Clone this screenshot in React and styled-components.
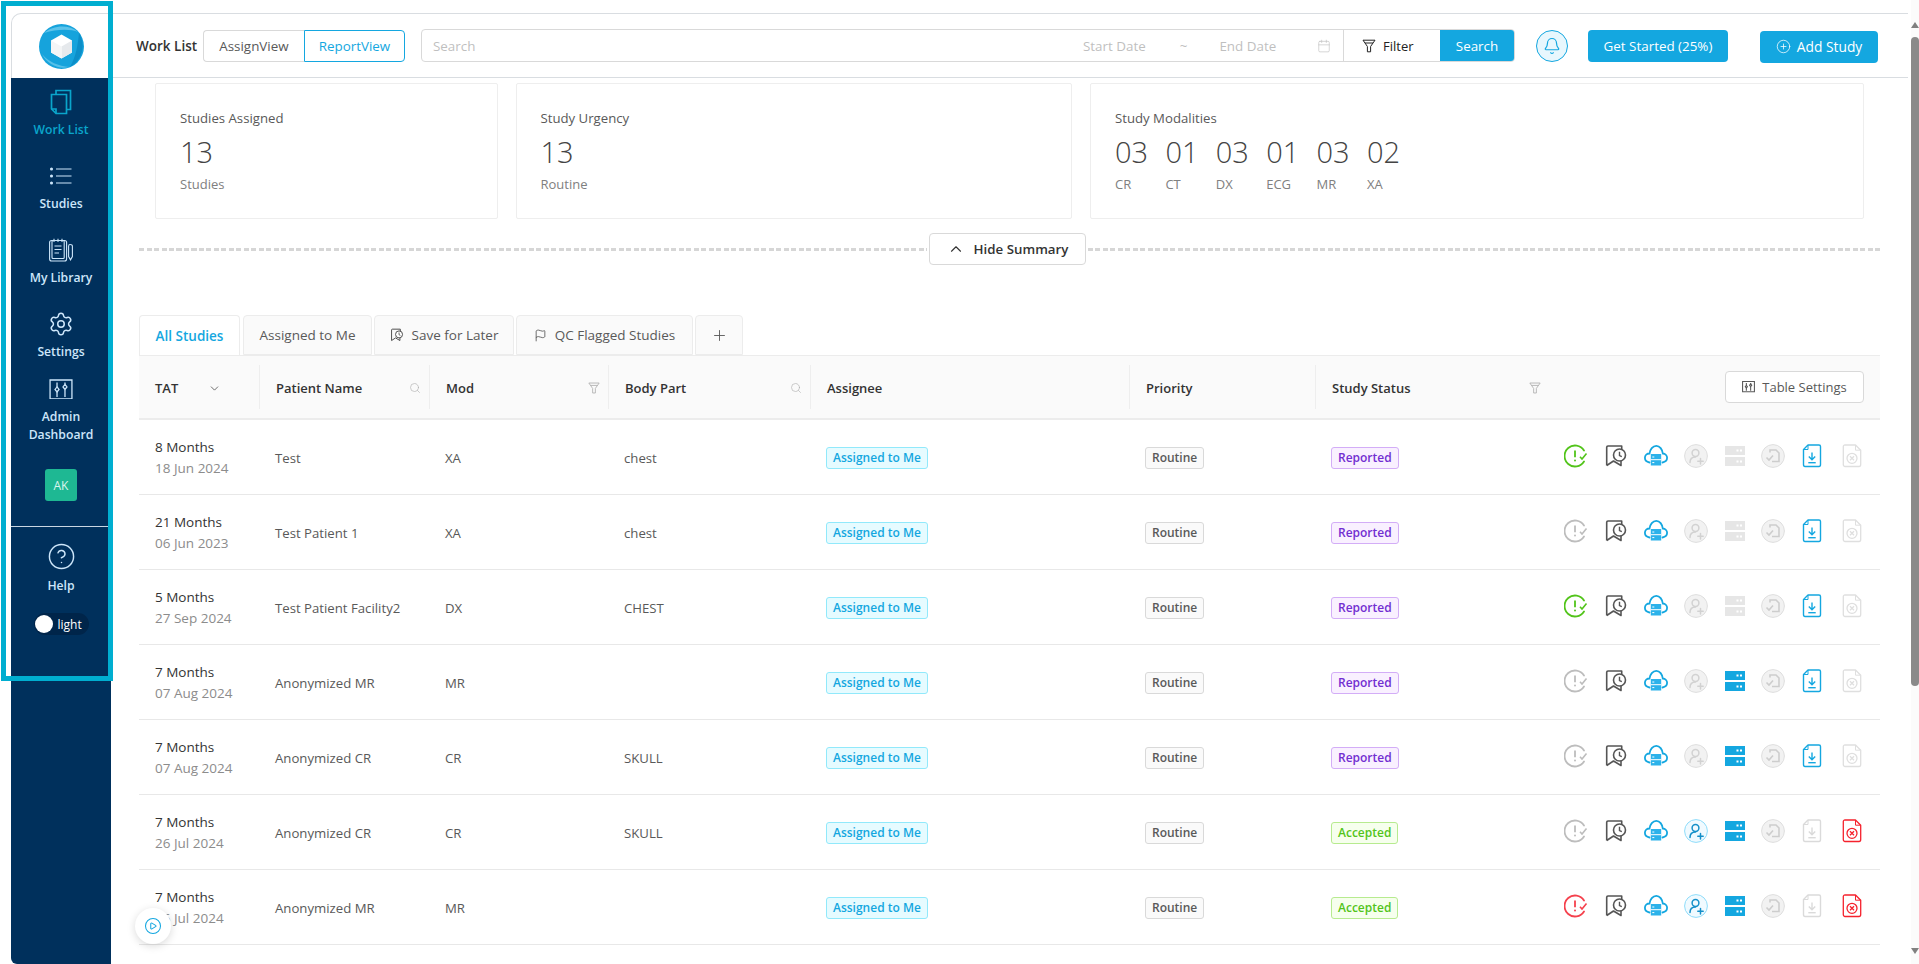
import React from "react";
import styled, { createGlobalStyle } from "styled-components";
import {
  Bell,
  Calendar,
  ChevronDown,
  ChevronUp,
  CircleHelp,
  CirclePlay,
  CirclePlus,
  Flag,
  Plus,
  Search as SearchIcon,
  Settings as SettingsIcon,
} from "lucide-react";

const BLUE = "#14a7e0";
const GRID = "120px 170px 179px 202px 319px 186px 1fr";

const GlobalStyle = createGlobalStyle`
  html, body {
    margin: 0;
    background: #fff;
    overflow: hidden;
  }
  body {
    font-family: "Open Sans", "Liberation Sans", sans-serif;
    color: #333;
  }
  * {
    box-sizing: border-box;
  }
`;

const Page = styled.div`
  position: relative;
  display: flex;
  width: 1919px;
  height: 964px;
  overflow: hidden;
`;

const Frame = styled.div`
  position: absolute;
  left: 1px;
  top: 1px;
  width: 112px;
  height: 680px;
  border: 5px solid #00aed0;
  z-index: 5;
  pointer-events: none;
`;

const Sidebar = styled.aside`
  width: 100px;
  margin: 13px 0 0 11px;
  display: flex;
  flex-direction: column;
  flex-shrink: 0;
`;

const LogoBox = styled.div`
  height: 65px;
  background: #fff;
  border-top: 1px solid #d9dde1;
  border-left: 1px solid #d9dde1;
  border-top-left-radius: 10px;
  display: flex;
  align-items: center;
  padding-left: 27px;
`;

const Nav = styled.nav`
  flex: 1;
  background: #00305c;
  border-bottom-left-radius: 6px;
  display: flex;
  flex-direction: column;
  align-items: center;
`;

const NavItem = styled.div`
  display: flex;
  flex-direction: column;
  align-items: center;
  gap: ${(p) => p.$gap || 6}px;
  margin-top: ${(p) => p.$top}px;
  color: ${(p) => (p.$active ? "#0aa5cb" : "#cde6fa")};
`;

const NavIcon = styled.div`
  height: 26px;
  display: flex;
  align-items: center;
  justify-content: center;
`;

const NavLabel = styled.div`
  font-size: 12.2px;
  line-height: 18px;
  font-weight: 600;
  text-align: center;
`;

const Avatar = styled.div`
  width: 32px;
  height: 32px;
  margin-top: 25px;
  border-radius: 3px;
  background: #1eb893;
  color: #d9f5ee;
  font-size: 12px;
  display: flex;
  align-items: center;
  justify-content: center;
`;

const NavDivider = styled.div`
  align-self: stretch;
  height: 1px;
  margin-top: 25px;
  background: #c9d6e2;
`;

const ThemeToggle = styled.div`
  width: 55px;
  height: 22px;
  margin-top: 18px;
  padding-left: 1px;
  border-radius: 11px;
  background: #00254a;
  color: #fff;
  font-size: 12px;
  font-weight: 400;
  display: flex;
  align-items: center;
  gap: 5px;
`;

const Knob = styled.div`
  width: 18px;
  height: 18px;
  border-radius: 50%;
  background: #fff;
`;

const Main = styled.main`
  width: 1797px;
  margin-top: 13px;
  flex-shrink: 0;
`;

const TopBar = styled.header`
  height: 65px;
  padding: 0 30px 0 25px;
  border-top: 1px solid #d9dde1;
  border-bottom: 1px solid #d9dde1;
  display: flex;
  align-items: center;
`;

const PageTitle = styled.div`
  width: 67px;
  font-size: 13.5px;
  font-weight: 600;
  color: #333;
`;

const Segment = styled.div`
  display: flex;
  height: 32px;
  margin-right: 16px;
`;

const SegmentItem = styled.div`
  width: ${(p) => p.$width}px;
  border: 1px solid ${(p) => (p.$active ? BLUE : "#d9d9d9")};
  border-radius: ${(p) => (p.$active ? "0 4px 4px 0" : "4px 0 0 4px")};
  border-right: ${(p) => (p.$active ? `1px solid ${BLUE}` : "none")};
  color: ${(p) => (p.$active ? BLUE : "#595959")};
  font-size: 13.4px;
  display: flex;
  align-items: center;
  justify-content: center;
`;

const SearchBox = styled.div`
  width: 1095px;
  height: 33px;
  border: 1px solid #d9d9d9;
  border-radius: 4px;
  display: flex;
  align-items: center;
  overflow: hidden;
`;

const Placeholder = styled.span`
  font-size: 13.4px;
  color: #bfbfbf;
  margin-left: ${(p) => p.$left || 0}px;
`;

const DateRange = styled.div`
  margin-left: auto;
  width: 260px;
  display: flex;
  align-items: center;
  color: #c4c4c4;
`;

const FilterCell = styled.div`
  width: 97px;
  height: 100%;
  border-left: 1px solid #d9d9d9;
  padding-left: 18px;
  display: flex;
  align-items: center;
  gap: 7px;
  font-size: 13px;
  font-weight: 500;
  color: #222;
`;

const FilledButton = styled.button`
  height: 32px;
  width: ${(p) => p.$width}px;
  margin-left: ${(p) => p.$left || 0}px;
  margin-top: ${(p) => p.$drop || 0}px;
  border: none;
  border-radius: ${(p) => (p.$flat ? "0" : "4px")};
  background: ${BLUE};
  color: #fff;
  font: inherit;
  font-size: ${(p) => p.$size || 13.4}px;
  display: flex;
  align-items: center;
  justify-content: center;
  gap: 6px;
  flex-shrink: 0;
`;

const BellButton = styled.div`
  width: 32px;
  height: 32px;
  margin-left: 21px;
  border: 1px solid ${BLUE};
  border-radius: 50%;
  background: #e8f7fd;
  color: ${BLUE};
  display: flex;
  align-items: center;
  justify-content: center;
  flex-shrink: 0;
`;

const Summary = styled.section`
  display: flex;
  gap: 18px;
  padding: 5px 0 0 44px;
`;

const Card = styled.div`
  width: ${(p) => p.$width}px;
  height: 136px;
  padding: 24px 24px 0;
  border: 1px solid #eeeeee;
  border-radius: 2px;
`;

const CardTitle = styled.div`
  font-size: 13.2px;
  line-height: 20px;
  color: #595959;
`;

const CardNumber = styled.div`
  margin-top: 4px;
  font-size: 29px;
  line-height: 40px;
  font-weight: 300;
  color: #444;
`;

const CardCaption = styled.div`
  margin-top: 3px;
  font-size: 13px;
  line-height: 18px;
  color: #808080;
`;

const Modalities = styled.div`
  display: flex;
`;

const Modality = styled.div`
  width: 50.4px;
`;

const SummaryToggle = styled.div`
  display: flex;
  align-items: center;
  width: 1741px;
  height: 32px;
  margin: 14px 0 0 28px;
`;

const Dash = styled.div`
  flex: ${(p) => (p.$width ? `0 0 ${p.$width}px` : 1)};
  height: 3px;
  background: repeating-linear-gradient(to right, #d6d6d6 0 5px, transparent 5px 7.5px);
`;

const HideButton = styled.div`
  width: 157px;
  height: 32px;
  margin: 0 2px;
  flex-shrink: 0;
  border: 1px solid #d9d9d9;
  border-radius: 4px;
  color: #333;
  font-size: 13.3px;
  font-weight: 600;
  display: flex;
  align-items: center;
  justify-content: center;
  gap: 9px;
`;

const Tabs = styled.div`
  display: flex;
  gap: 2px;
  height: 40px;
  margin: 50px 0 0 28px;
`;

const Tab = styled.div`
  width: ${(p) => p.$width}px;
  margin-right: ${(p) => p.$after || 0}px;
  border: 1px solid #ececec;
  border-bottom: ${(p) => (p.$active ? "none" : "1px solid #ececec")};
  border-radius: 4px 4px 0 0;
  background: ${(p) => (p.$active ? "#fff" : "#fafafa")};
  color: ${(p) => (p.$active ? BLUE : "#595959")};
  font-size: 13.5px;
  font-weight: ${(p) => (p.$active ? 600 : 400)};
  display: flex;
  align-items: center;
  justify-content: center;
  gap: 8px;
`;

const Table = styled.div`
  width: 1741px;
  margin-left: 28px;
`;

const HeadRow = styled.div`
  display: grid;
  grid-template-columns: ${GRID};
  align-items: center;
  height: 65px;
  background: #fafafa;
  border-top: 1px solid #ececec;
  border-bottom: 2px solid #ececec;
`;

const HeadCell = styled.div`
  height: 44px;
  padding: 2px 8px 0 16px;
  border-left: ${(p) => (p.$first ? "none" : "1px solid #eeeeee")};
  font-size: 13px;
  font-weight: 600;
  color: #333;
  display: flex;
  align-items: center;
  justify-content: space-between;
`;

const ColumnTools = styled.div`
  color: ${(p) => p.$color || "#b0b0b0"};
  margin-right: ${(p) => p.$right || 0}px;
  display: flex;
  align-items: center;
`;

const StatusHead = styled.div`
  width: 209px;
  display: flex;
  align-items: center;
  justify-content: space-between;
`;

const SettingsButton = styled.div`
  width: 139px;
  height: 32px;
  margin: -2px 8px 0 0;
  border: 1px solid #d9d9d9;
  border-radius: 4px;
  background: #fff;
  color: #595959;
  font-size: 13px;
  font-weight: 400;
  display: flex;
  align-items: center;
  justify-content: center;
  gap: 7px;
`;

const Row = styled.div`
  display: grid;
  grid-template-columns: ${GRID};
  align-items: center;
  height: 75px;
  border-bottom: 1px solid #e8e8e8;
`;

const Cell = styled.div`
  padding: 2px 16px 0;
  font-size: 13.2px;
  color: #595959;
`;

const Duration = styled.div`
  font-size: 13.5px;
  line-height: 21px;
  color: #333;
`;

const StudyDate = styled.div`
  font-size: 13.5px;
  line-height: 21px;
  color: #8c8c8c;
`;

const TAG_COLORS = {
  assigned: ["#e6fbff", "#91e9fb", BLUE],
  routine: ["#fafafa", "#d9d9d9", "#595959"],
  reported: ["#f9f0ff", "#d3adf7", "#722ed1"],
  accepted: ["#f6ffed", "#b7eb8f", "#52c41a"],
};

const Tag = styled.span`
  display: inline-block;
  height: 22px;
  padding: 0 6px;
  border: 1px solid ${(p) => TAG_COLORS[p.$kind][1]};
  border-radius: 3px;
  background: ${(p) => TAG_COLORS[p.$kind][0]};
  color: ${(p) => TAG_COLORS[p.$kind][2]};
  font-size: 12px;
  line-height: 20px;
  font-weight: 600;
`;

const StatusCell = styled.div`
  padding: 2px 0 0 16px;
  display: flex;
  align-items: center;
  justify-content: space-between;
`;

const Actions = styled.div`
  display: flex;
  margin-top: -5px;
  padding-right: 8px;
`;

const ActionSlot = styled.div`
  width: ${(p) => p.$width || 40}px;
  height: 24px;
  display: flex;
  align-items: center;
  justify-content: center;
`;

const PlayButton = styled.div`
  position: absolute;
  left: 135px;
  top: 908px;
  width: 36px;
  height: 36px;
  border-radius: 50%;
  background: #fff;
  box-shadow: 0 2px 8px rgba(0, 0, 0, 0.15);
  color: ${BLUE};
  display: flex;
  align-items: center;
  justify-content: center;
`;

const Scrollbar = styled.div`
  width: 8px;
  margin-left: 3px;
  display: flex;
  flex-direction: column;
  align-items: center;
  padding-top: 22px;
  background: #fbfbfb;
`;

const ScrollThumb = styled.div`
  width: 8px;
  height: 649px;
  margin-top: 9px;
  background: #8a8a8a;
  border-radius: 4px;
`;

const ScrollArrow = styled.div`
  width: 0;
  height: 0;
  border-left: 4px solid transparent;
  border-right: 4px solid transparent;
  border-${(p) => (p.$down ? "top" : "bottom")}: 6px solid #808080;
  margin-top: ${(p) => p.$top || 0}px;
`;

const Logo = () => (
  <svg width="45" height="45" viewBox="0 0 45 45">
    <circle cx="22.5" cy="22.5" r="22.5" fill="#16a3dc" />
    <path d="M5 9C14 1 30 0 39 8C32 5 18 5 5 9Z" fill="#5cc3ea" />
    <path d="M40 9C47 20 44 36 31 43C37 33 39 20 40 9Z" fill="#0c8ec8" />
    <path d="M3 30C8 40 20 46 30 43C20 42 9 38 3 30Z" fill="#56c0e8" />
    <path d="M22.5 10.5L33 16.5V28.5L22.5 34.5L12 28.5V16.5Z" fill="#ffffff" />
    <path d="M22.5 22.5L33 16.5V28.5L22.5 34.5Z" fill="#e6e9ec" />
    <path d="M22.5 22.5V34.5L12 28.5V16.5Z" fill="#f4f5f6" />
  </svg>
);

const WorkListIcon = () => (
  <svg width="22" height="26" viewBox="0 0 22 26" fill="none" stroke="currentColor" strokeWidth="1.7">
    <path d="M6 5V1.5H20.5V20.5H16.5" />
    <path d="M1.5 5.5H16.5V24.5H6L1.5 20Z" />
    <path d="M1.5 20H6V24.5" />
  </svg>
);

const StudiesIcon = () => (
  <svg width="22" height="18" viewBox="0 0 22 18" fill="none" stroke="currentColor" strokeWidth="1.2">
    <path d="M6 2H21.5M6 9H21.5M6 16H21.5" />
    <circle cx="1.5" cy="2" r="0.9" fill="currentColor" />
    <circle cx="1.5" cy="9" r="0.9" fill="currentColor" />
    <circle cx="1.5" cy="16" r="0.9" fill="currentColor" />
  </svg>
);

const LibraryIcon = () => (
  <svg width="24" height="24" viewBox="0 0 24 24" fill="none" stroke="currentColor" strokeWidth="1.1">
    <rect x="0.6" y="2.5" width="17" height="20.5" rx="2" />
    <rect x="3" y="2.5" width="12.2" height="18" rx="1" />
    <path d="M5 0.8V4M9 0.8V4M13 0.8V4" />
    <path d="M5.5 8H12.5M5.5 11.5H12.5M5.5 15H10" />
    <path d="M21 6.5C22.2 6.5 23.4 7 23.4 8.2V18.5L21.5 21.8L19.6 18.5V8.2C19.6 7 20.2 6.5 21 6.5Z" />
  </svg>
);

const SlidersBox = ({ size = 24, weight = 1.3 }) => (
  <svg width={size} height={size * 0.87} viewBox="0 0 24 21" fill="none" stroke="currentColor" strokeWidth={weight}>
    <path d="M1 1H23V20H1Z" />
    <path d="M8 3.5V8M8 13V18M16 3.5V5.5M16 10.5V18" />
    <path d="M8 8L10 10.5L8 13L6 10.5Z" />
    <path d="M16 5.5L18 8L16 10.5L14 8Z" />
  </svg>
);

const FunnelIcon = ({ size = 14, color = "currentColor" }) => (
  <svg width={size} height={size} viewBox="0 0 14 14" fill="none" stroke={color} strokeWidth="1">
    <path d="M1 1.2H13L8.6 7.5V12.8H5.4V7.5Z" />
    <path d="M3 4H11" />
  </svg>
);

const BookmarkClock = ({ size = 24, color = "#555" }) => (
  <svg width={size} height={size} viewBox="0 0 24 24" fill="none" stroke={color} strokeWidth="1.6">
    <path d="M2.7 21.5V3.2C2.7 2.5 3.2 2 4 2H17.7V6M2.7 21.5L9.5 17L17 21.5V16.5" strokeLinejoin="round" />
    <circle cx="15.5" cy="11" r="6" fill="#fff" />
    <path d="M15.5 7.7V11.5L17.8 12.7" strokeWidth="1.4" />
  </svg>
);

const AlertClock = ({ color }) => (
  <svg width="24" height="24" viewBox="0 0 24 24" fill="none" stroke={color} strokeWidth="1.8">
    <path d="M20 6.5A10.5 10.5 0 1 0 20 17.5" strokeLinecap="round" />
    <path d="M11 6.5V13.2" />
    <circle cx="11" cy="16.6" r="1" fill={color} stroke="none" />
    <path d="M16 12.8L18 15L22.5 9.5" strokeWidth="1.6" />
  </svg>
);

const CloudServer = () => (
  <svg width="24" height="24" viewBox="0 0 24 24" fill="none">
    <path
      d="M5.5 18.5C3 18 0.9 16.3 0.9 13.8C0.9 11.3 3 9.5 5.5 9.5C6 5.5 8.8 1.8 12.3 1.8C15.8 1.8 18.3 5.5 18.8 9.5C21.2 9.6 23.1 11.5 23.1 13.8C23.1 16.3 21.2 18 18.5 18.5"
      stroke="#14a7e0"
      strokeWidth="1.8"
      strokeLinecap="round"
    />
    <rect x="6.8" y="10" width="10.4" height="11.5" fill="#2cb2ea" />
    <path d="M6.8 15.7H17.2" stroke="#fff" strokeWidth="1" />
    <path d="M8.3 13H10.3M8.3 18.6H10.3" stroke="#fff" strokeWidth="1" />
  </svg>
);

const PersonPlus = ({ on }) => {
  const stroke = on ? "#1590c9" : "#d2d2d2";
  return (
    <svg width="24" height="24" viewBox="0 0 24 24" fill="none">
      <circle cx="12" cy="12" r="11.4" fill={on ? "#f0faff" : "#f2f2f2"} stroke={on ? "#8edcfa" : "#dedede"} strokeWidth="1" />
      <g stroke={stroke} strokeWidth="1.5" strokeLinecap="round">
        <circle cx="11.5" cy="9" r="3.4" />
        <path d="M6 18.5C6 15 8.3 13 11.5 13" />
        <path d="M16.5 14.5V20M13.8 17.3H19.2" />
      </g>
    </svg>
  );
};

const ServerBars = ({ on }) => {
  const fill = on ? "#14a7e0" : "#e6e6e6";
  return (
    <svg width="20" height="20" viewBox="0 0 20 20">
      <rect x="0" y="0" width="20" height="9" fill={fill} />
      <rect x="0" y="11" width="20" height="9" fill={fill} />
      <rect x="11.5" y="3.5" width="2" height="2" fill="#fff" />
      <rect x="15" y="3.5" width="2" height="2" fill="#fff" />
      <rect x="11.5" y="14.5" width="2" height="2" fill="#fff" />
      <rect x="15" y="14.5" width="2" height="2" fill="#fff" />
    </svg>
  );
};

const CircleDoc = () => (
  <svg width="24" height="24" viewBox="0 0 24 24" fill="none">
    <circle cx="12" cy="12" r="11.4" fill="#f2f2f2" stroke="#dedede" strokeWidth="1" />
    <path d="M9 8.5V6H15L18 9V17.5H11" stroke="#cdcdcd" strokeWidth="1.6" />
    <path d="M5.5 13.5L8 16L12 11.5" stroke="#cdcdcd" strokeWidth="1.6" />
  </svg>
);

const DocDownload = ({ on }) => {
  const color = on ? "#14a7e0" : "#dadada";
  return (
    <svg width="24" height="24" viewBox="0 0 24 24" fill="none" stroke={color} strokeWidth="1.4">
      <path d="M8 1H19C20 1 20.5 1.5 20.5 2.5V20.5C20.5 21.5 20 22.5 19 22.5H5C4 22.5 3.5 21.5 3.5 20.5V5.5Z" strokeLinejoin="round" />
      <path d="M8 1V5.5H3.5" strokeWidth="1" />
      <path d="M12 8.5V15.5M8.8 12.5L12 15.7L15.2 12.5" />
      <path d="M8.3 18.7H15.7" />
    </svg>
  );
};

const DocCancel = ({ on }) => {
  const color = on ? "#f5222d" : "#dfdfdf";
  return (
    <svg width="24" height="24" viewBox="0 0 24 24" fill="none" stroke={color} strokeWidth="1.3">
      <path d="M5 1H15.5L20.7 6.2V20.5C20.7 21.5 20 22.5 19 22.5H5C4 22.5 3.3 21.5 3.3 20.5V2.5C3.3 1.5 4 1 5 1Z" strokeLinejoin="round" />
      <path d="M15.5 1V6.2H20.7" strokeWidth="1" />
      <circle cx="12" cy="14.3" r="5" />
      <path d="M10 12.3L14 16.3M14 12.3L10 16.3" />
    </svg>
  );
};

const ALERT = { green: "#52c41a", grey: "#bdbdbd", red: "#f5414d" };

const STUDIES = [
  { tat: "8 Months", date: "18 Jun 2024", name: "Test", mod: "XA", part: "chest", status: "Reported", alert: "green", server: false, person: false, report: false },
  { tat: "21 Months", date: "06 Jun 2023", name: "Test Patient 1", mod: "XA", part: "chest", status: "Reported", alert: "grey", server: false, person: false, report: false },
  { tat: "5 Months", date: "27 Sep 2024", name: "Test Patient Facility2", mod: "DX", part: "CHEST", status: "Reported", alert: "green", server: false, person: false, report: false },
  { tat: "7 Months", date: "07 Aug 2024", name: "Anonymized MR", mod: "MR", part: "", status: "Reported", alert: "grey", server: true, person: false, report: false },
  { tat: "7 Months", date: "07 Aug 2024", name: "Anonymized CR", mod: "CR", part: "SKULL", status: "Reported", alert: "grey", server: true, person: false, report: false },
  { tat: "7 Months", date: "26 Jul 2024", name: "Anonymized CR", mod: "CR", part: "SKULL", status: "Accepted", alert: "grey", server: true, person: true, report: true },
  { tat: "7 Months", date: "26 Jul 2024", name: "Anonymized MR", mod: "MR", part: "", status: "Accepted", alert: "red", server: true, person: true, report: true },
];

const MODALITIES = [
  ["03", "CR"],
  ["01", "CT"],
  ["03", "DX"],
  ["01", "ECG"],
  ["03", "MR"],
  ["02", "XA"],
];

const App = () => {
  return (
    <Page>
      <GlobalStyle />
      <Frame />
      <Sidebar>
        <LogoBox>
          <Logo />
        </LogoBox>
        <Nav>
          <NavItem $top={11} $active>
            <NavIcon><WorkListIcon /></NavIcon>
            <NavLabel>Work List</NavLabel>
          </NavItem>
          <NavItem $top={24}>
            <NavIcon><StudiesIcon /></NavIcon>
            <NavLabel>Studies</NavLabel>
          </NavItem>
          <NavItem $top={24}>
            <NavIcon><LibraryIcon /></NavIcon>
            <NavLabel>My Library</NavLabel>
          </NavItem>
          <NavItem $top={24}>
            <NavIcon><SettingsIcon size={26} strokeWidth={1.4} /></NavIcon>
            <NavLabel>Settings</NavLabel>
          </NavItem>
          <NavItem $top={15}>
            <NavIcon><SlidersBox /></NavIcon>
            <NavLabel>Admin<br />Dashboard</NavLabel>
          </NavItem>
          <Avatar>AK</Avatar>
          <NavDivider />
          <NavItem $top={16} $gap={8}>
            <NavIcon><CircleHelp size={29} strokeWidth={1.2} /></NavIcon>
            <NavLabel>Help</NavLabel>
          </NavItem>
          <ThemeToggle>
            <Knob />
            light
          </ThemeToggle>
        </Nav>
      </Sidebar>

      <Main>
        <TopBar>
          <PageTitle>Work List</PageTitle>
          <Segment>
            <SegmentItem $width={101}>AssignView</SegmentItem>
            <SegmentItem $width={101} $active>ReportView</SegmentItem>
          </Segment>
          <SearchBox>
            <Placeholder $left={11}>Search</Placeholder>
            <DateRange>
              <Placeholder>Start Date</Placeholder>
              <Placeholder $left={34}>~</Placeholder>
              <Placeholder $left={32}>End Date</Placeholder>
              <Calendar size={14} strokeWidth={1.2} style={{ marginLeft: 41 }} />
            </DateRange>
            <FilterCell>
              <FunnelIcon />
              Filter
            </FilterCell>
            <FilledButton $width={74} $flat>Search</FilledButton>
          </SearchBox>
          <BellButton>
            <Bell size={18} strokeWidth={1.6} />
          </BellButton>
          <FilledButton $width={140} $left={20}>Get Started (25%)</FilledButton>
          <FilledButton $width={118} $left={32} $drop={2} $size={13.8}>
            <CirclePlus size={15} strokeWidth={1.2} />
            Add Study
          </FilledButton>
        </TopBar>

        <Summary>
          <Card $width={342.5}>
            <CardTitle>Studies Assigned</CardTitle>
            <CardNumber>13</CardNumber>
            <CardCaption>Studies</CardCaption>
          </Card>
          <Card $width={556.5}>
            <CardTitle>Study Urgency</CardTitle>
            <CardNumber>13</CardNumber>
            <CardCaption>Routine</CardCaption>
          </Card>
          <Card $width={774}>
            <CardTitle>Study Modalities</CardTitle>
            <Modalities>
              {MODALITIES.map(([count, label]) => (
                <Modality key={label}>
                  <CardNumber>{count}</CardNumber>
                  <CardCaption>{label}</CardCaption>
                </Modality>
              ))}
            </Modalities>
          </Card>
        </Summary>

        <SummaryToggle>
          <Dash $width={788} />
          <HideButton>
            <ChevronUp size={18} strokeWidth={1.5} />
            Hide Summary
          </HideButton>
          <Dash />
        </SummaryToggle>

        <Tabs>
          <Tab $width={101} $after={1} $active>All Studies</Tab>
          <Tab $width={129}>Assigned to Me</Tab>
          <Tab $width={140}><BookmarkClock size={14} color="#444" />Save for Later</Tab>
          <Tab $width={177}><Flag size={13} strokeWidth={1.4} color="#444" />QC Flagged Studies</Tab>
          <Tab $width={48}><Plus size={17} strokeWidth={1.3} /></Tab>
        </Tabs>

        <Table>
          <HeadRow>
            <HeadCell $first>
              TAT
              <ColumnTools $right={30} $color="#444">
                <ChevronDown size={13} strokeWidth={1.4} />
              </ColumnTools>
            </HeadCell>
            <HeadCell>
              Patient Name
              <ColumnTools><SearchIcon size={12} strokeWidth={1.3} /></ColumnTools>
            </HeadCell>
            <HeadCell>
              Mod
              <ColumnTools><FunnelIcon size={12} /></ColumnTools>
            </HeadCell>
            <HeadCell>
              Body Part
              <ColumnTools><SearchIcon size={12} strokeWidth={1.3} /></ColumnTools>
            </HeadCell>
            <HeadCell>Assignee</HeadCell>
            <HeadCell>Priority</HeadCell>
            <HeadCell>
              <StatusHead>
                Study Status
                <ColumnTools><FunnelIcon size={12} /></ColumnTools>
              </StatusHead>
              <SettingsButton>
                <SlidersBox size={13} weight={2} />
                Table Settings
              </SettingsButton>
            </HeadCell>
          </HeadRow>

          {STUDIES.map((study, i) => (
            <Row key={i}>
              <Cell>
                <Duration>{study.tat}</Duration>
                <StudyDate>{study.date}</StudyDate>
              </Cell>
              <Cell>{study.name}</Cell>
              <Cell>{study.mod}</Cell>
              <Cell>{study.part}</Cell>
              <Cell><Tag $kind="assigned">Assigned to Me</Tag></Cell>
              <Cell><Tag $kind="routine">Routine</Tag></Cell>
              <StatusCell>
                <Tag $kind={study.status.toLowerCase()}>{study.status}</Tag>
                <Actions>
                  <ActionSlot><AlertClock color={ALERT[study.alert]} /></ActionSlot>
                  <ActionSlot><BookmarkClock /></ActionSlot>
                  <ActionSlot><CloudServer /></ActionSlot>
                  <ActionSlot><PersonPlus on={study.person} /></ActionSlot>
                  <ActionSlot $width={38}><ServerBars on={study.server} /></ActionSlot>
                  <ActionSlot $width={38}><CircleDoc /></ActionSlot>
                  <ActionSlot><DocDownload on={!study.report} /></ActionSlot>
                  <ActionSlot><DocCancel on={study.report} /></ActionSlot>
                </Actions>
              </StatusCell>
            </Row>
          ))}
        </Table>
      </Main>

      <Scrollbar>
        <ScrollArrow />
        <ScrollThumb />
        <ScrollArrow $down $top={262} />
      </Scrollbar>

      <PlayButton>
        <CirclePlay size={18} strokeWidth={1.4} />
      </PlayButton>
    </Page>
  );
};

export default App;
